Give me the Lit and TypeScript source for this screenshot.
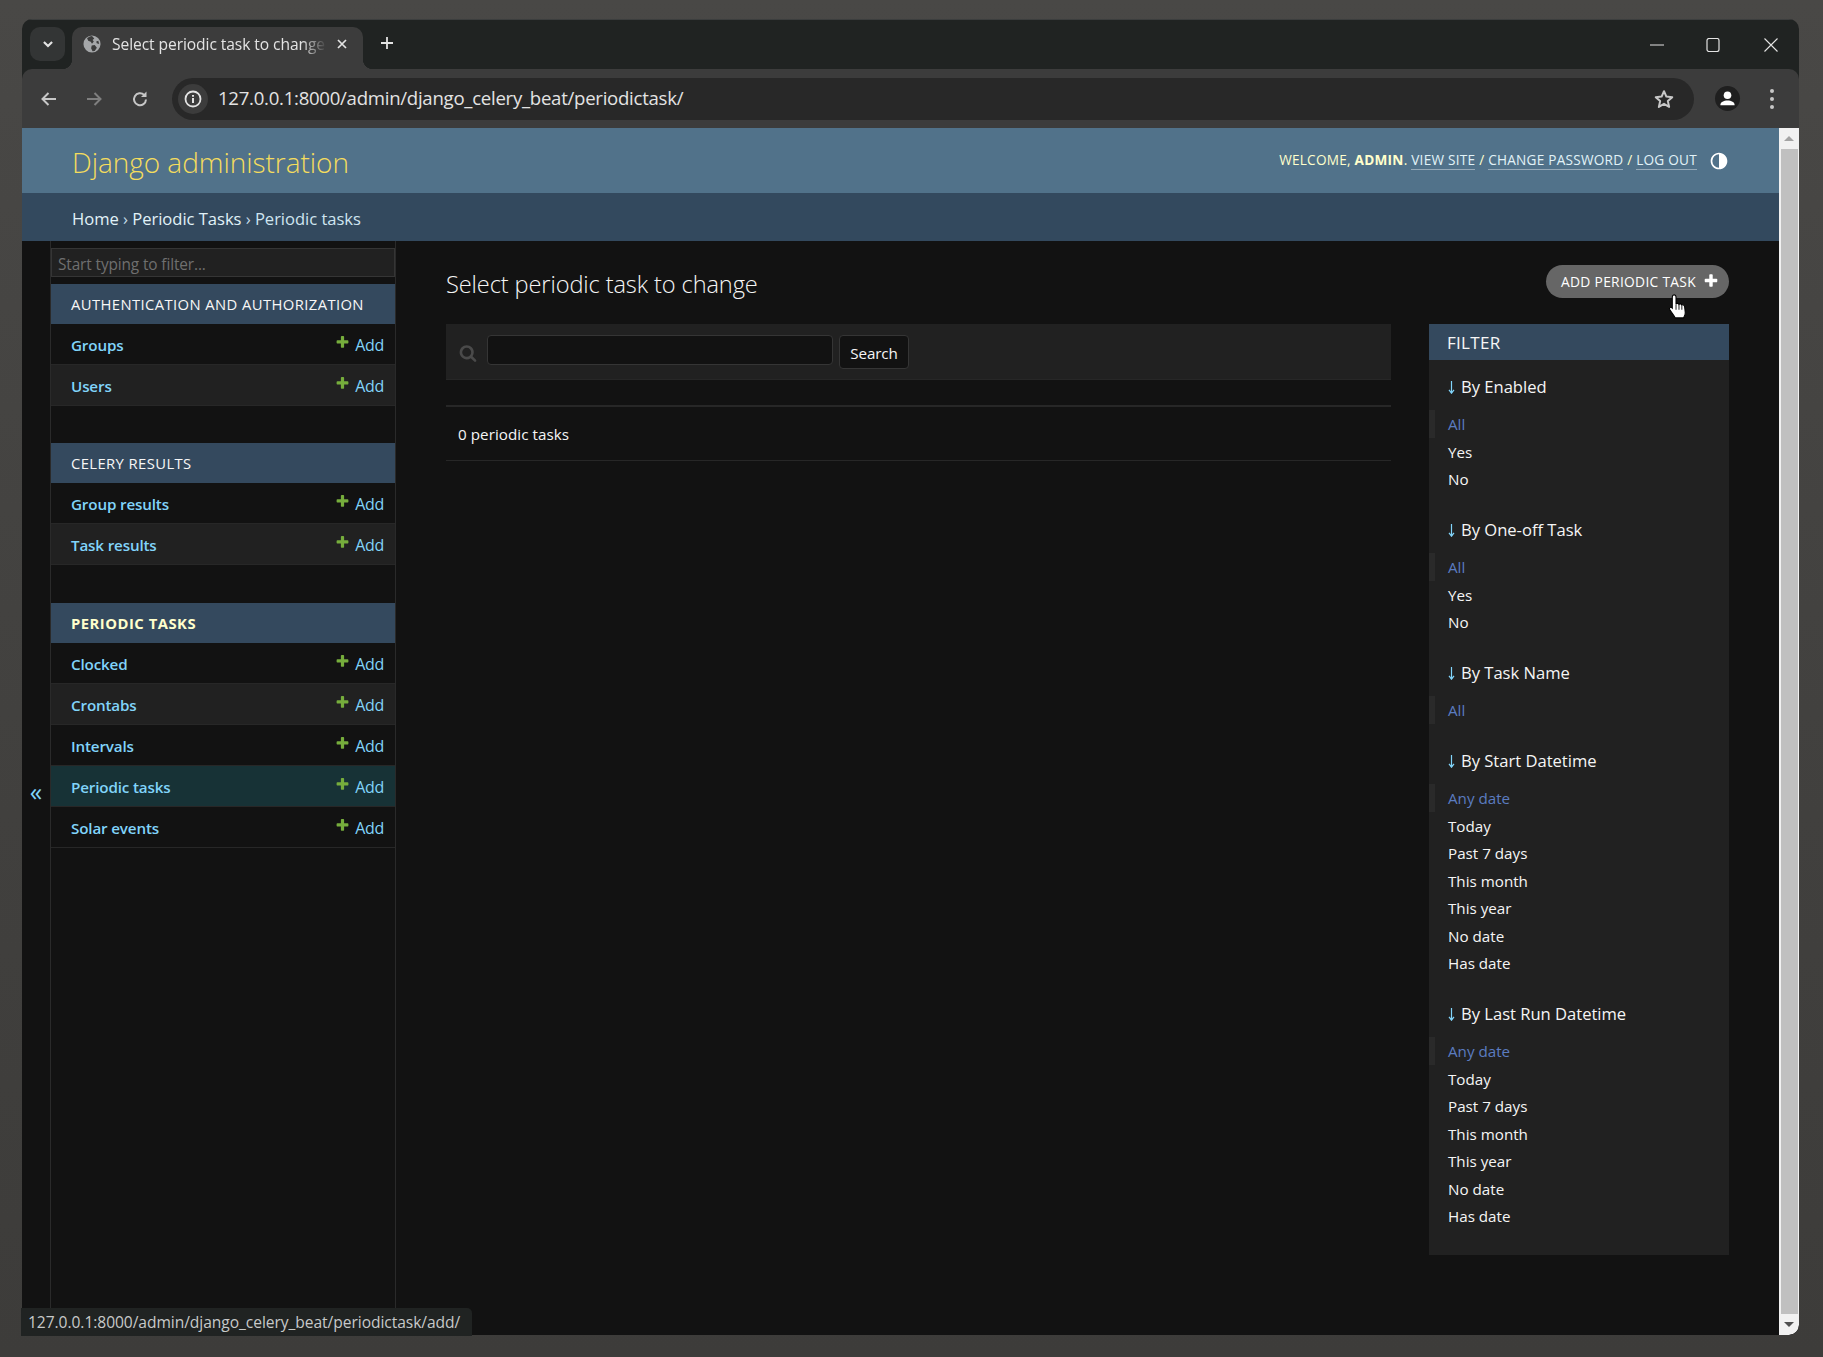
import { LitElement, html, css } from "lit";
import { customElement } from "lit/decorators.js";

const PLUS = "M1600 736v192q0 40-28 68t-68 28h-416v416q0 40-28 68t-68 28h-192q-40 0-68-28t-28-68v-416h-416q-40 0-68-28t-28-68v-192q0-40 28-68t68-28h416v-416q0-40 28-68t68-28h192q40 0 68 28t28 68v416h416q40 0 68 28t28 68z";
const SEARCH = "M1216 832q0-185-131.5-316.5t-316.5-131.5-316.5 131.5-131.5 316.5 131.5 316.5 316.5 131.5 316.5-131.5 131.5-316.5zm512 832q0 52-38 90t-90 38q-54 0-90-38l-343-342q-179 124-399 124-143 0-273.5-55.5t-225-150-150-225-55.5-273.5 55.5-273.5 150-225 225-150 273.5-55.5 273.5 55.5 225 150 150 225 55.5 273.5q0 220-124 399l343 343q37 37 37 90z";

const plus = (cls: string) => html`<svg class=${cls} viewBox="0 0 1792 1792"><path fill="currentColor" d=${PLUS}></path></svg>`;

const MODULES = [
  { name: "Authentication and Authorization", current: false, rows: [{ n: "Groups" }, { n: "Users" }] },
  { name: "Celery Results", current: false, rows: [{ n: "Group results" }, { n: "Task results" }] },
  {
    name: "Periodic Tasks",
    current: true,
    rows: [{ n: "Clocked" }, { n: "Crontabs" }, { n: "Intervals" }, { n: "Periodic tasks", sel: true }, { n: "Solar events" }],
  },
];

const DATES = ["Any date", "Today", "Past 7 days", "This month", "This year", "No date", "Has date"];
const FILTERS = [
  { t: "By Enabled", o: ["All", "Yes", "No"] },
  { t: "By One-off Task", o: ["All", "Yes", "No"] },
  { t: "By Task Name", o: ["All"] },
  { t: "By Start Datetime", o: DATES },
  { t: "By Last Run Datetime", o: DATES },
];

@customElement("app-root")
export class AppRoot extends LitElement {
  static styles = css`
    :host {
      display: block;
      width: 1823px;
      height: 1357px;
      box-sizing: border-box;
      padding: 19px 24px 22px 22px;
      background: linear-gradient(180deg, #494846 0%, #41403e 60%, #3d3c3a 100%);
      font-family: "Open Sans", "Noto Sans", sans-serif;
      overflow: hidden;
      position: relative;
    }
    * { box-sizing: border-box; }
    a { text-decoration: none; color: inherit; }
    .window {
      width: 1777px;
      height: 1316px;
      display: flex;
      flex-direction: column;
      border-radius: 10px;
      overflow: hidden;
      background: #202322;
    }
    .tabstrip {
      height: 50px;
      flex: none;
      display: flex;
      align-items: flex-start;
      padding: 8px 0 0 8px;
      position: relative;
      border-top: 1px solid #3c3e3e;
    }
    .tabmenu {
      width: 35px;
      height: 34px;
      border-radius: 10px;
      background: #333535;
      display: flex;
      align-items: center;
      justify-content: center;
      color: #e3e3e3;
      margin-top: -1px;
    }
    .tabmenu svg { width: 14px; height: 14px; }
    .tab {
      width: 291px;
      height: 42px;
      margin: -1px 0 0 7px;
      background: #3c3c3c;
      border-radius: 10px 10px 0 0;
      display: flex;
      align-items: center;
      padding: 0 0 8px 11px;
      color: #e3e3e3;
      font-size: 15.6px;
      letter-spacing: -0.08px;
      position: relative;
    }
    .tab::before, .tab::after {
      content: "";
      position: absolute;
      bottom: 0;
      width: 10px;
      height: 10px;
    }
    .tab::before { left: -10px; background: radial-gradient(circle at 0 0, transparent 10px, #3c3c3c 10.5px); }
    .tab::after { right: -10px; background: radial-gradient(circle at 100% 0, transparent 10px, #3c3c3c 10.5px); }
    .favicon { width: 18px; height: 18px; flex: none; }
    .tabtitle {
      margin-left: 11px;
      width: 215px;
      white-space: nowrap;
      overflow: hidden;
      -webkit-mask-image: linear-gradient(90deg, #000 88%, transparent 100%);
      mask-image: linear-gradient(90deg, #000 88%, transparent 100%);
    }
    .tabclose { width: 12px; height: 12px; margin-left: 9px; flex: none; color: #e3e3e3; }
    .newtab { width: 16px; height: 16px; margin: 7px 0 0 16px; color: #e3e3e3; flex: none; }
    .winctl { margin-left: auto; display: flex; align-items: center; gap: 44px; padding: 10px 21px 0 0; color: #e3e3e3; }
    .winctl svg { width: 14px; height: 14px; display: block; }
    .winctl svg:first-child { margin-right: -2px; }
    .toolbar {
      height: 59px;
      flex: none;
      background: #3c3c3c;
      border-radius: 10px 10px 0 0;
      display: flex;
      align-items: center;
      padding: 0 0 0 17px;
      color: #c7c7c7;
    }
    .navbtn { width: 20px; height: 20px; flex: none; margin-right: 25px; }
    .navbtn.off { color: #7f7f7f; margin-right: 26px; }
    .navbtn.reload { margin-right: 0; }
    .omnibox {
      width: 1522px;
      height: 42px;
      margin-left: 22px;
      border-radius: 21px;
      background: #282828;
      display: flex;
      align-items: center;
      padding: 0 19px 0 6px;
      font-size: 18.6px;
      color: #e3e3e3;
      letter-spacing: -0.27px;
    }
    .info {
      width: 30px;
      height: 30px;
      border-radius: 50%;
      background: #3c3c3c;
      display: flex;
      align-items: center;
      justify-content: center;
      margin-right: 10px;
      flex: none;
    }
    .info svg { width: 18px; height: 18px; }
    .url { flex: 1; white-space: nowrap; padding-bottom: 3px; }
    .star { width: 22px; height: 22px; color: #c7c7c7; flex: none; }
    .avatar {
      width: 25px;
      height: 25px;
      border-radius: 50%;
      background: #1f1f1f;
      margin-left: 21px;
      display: flex;
      align-items: center;
      justify-content: center;
      flex: none;
    }
    .avatar svg { width: 19px; height: 19px; }
    .dots { width: 4px; margin-left: 30px; display: flex; flex-direction: column; gap: 4px; flex: none; }
    .dots i { display: block; width: 4px; height: 4px; border-radius: 50%; background: #c7c7c7; }

    .page { flex: 1; display: flex; min-height: 0; background: #121212; }
    .site { flex: 1; display: flex; flex-direction: column; min-width: 0; }
    .scrollbar { width: 20px; flex: none; background: #f1f1f1; display: flex; flex-direction: column; align-items: center; border-bottom-right-radius: 10px; overflow: hidden; }
    .sbtn { height: 21px; width: 100%; display: flex; align-items: center; justify-content: center; flex: none; }
    .tri-up { width: 0; height: 0; border: 5px solid transparent; border-top: 0; border-bottom: 5px solid #a3a3a3; }
    .tri-down { width: 0; height: 0; border: 5px solid transparent; border-bottom: 0; border-top: 5px solid #505050; }
    .thumb { flex: 1; width: 17px; background: #c0c0c0; }

    .header {
      height: 65px;
      flex: none;
      background: #51728a;
      display: flex;
      align-items: center;
      justify-content: space-between;
      padding: 0 50px 0 50px;
    }
    .brand { font-size: 28px; font-weight: 300; color: #f5dd5d; letter-spacing: -0.05px; padding-top: 2px; }
    .usertools {
      display: flex;
      align-items: center;
      font-size: 13.6px;
      color: #ffffcc;
      text-transform: uppercase;
      letter-spacing: 0.25px;
      white-space: pre;
      padding-bottom: 2px;
    }
    .usertools strong { font-weight: 700; }
    .usertools a { border-bottom: 1px solid rgba(255, 255, 255, 0.4); color: #e1f2f8; }
    .themebtn { width: 20px; height: 20px; margin-left: 12px; color: #fff; flex: none; margin-bottom: -2px; }
    .crumbs {
      height: 48px;
      flex: none;
      background: #33495e;
      display: flex;
      align-items: center;
      padding: 2px 50px 0;
      font-size: 16.6px;
      color: #c4dce8;
      letter-spacing: -0.04px;
      white-space: pre;
    }
    .crumbs a { color: #e1f2f8; }
    .crumbs .cur { color: #cfe5f0; }

    .body { flex: 1; display: flex; min-height: 0; }
    .toggle {
      width: 28px;
      flex: none;
      display: flex;
      align-items: center;
      justify-content: center;
      color: #81d4fa;
      font-size: 25px;
      padding: 5px 0 0 0;
    }
    .sidebar {
      width: 346px;
      flex: none;
      border-left: 1px solid #2a2a2a;
      border-right: 1px solid #2a2a2a;
      padding-top: 7px;
      display: flex;
      flex-direction: column;
      gap: 7px;
    }
    .navfilter {
      height: 29px;
      background: #212121;
      border: 1px solid #353535;
      display: flex;
      align-items: center;
      padding: 3px 6px 0;
      font-size: 15.4px;
      color: #6f6f6f;
      letter-spacing: -0.12px;
      flex: none;
    }
    .modules { display: flex; flex-direction: column; gap: 37px; }
    .modules > div:last-child { margin-top: 1px; }
    .caption {
      height: 40px;
      background: #34495e;
      display: flex;
      align-items: center;
      padding: 0 20px;
      font-size: 14.8px;
      color: #f7f7f7;
      letter-spacing: 0.4px;
      text-transform: uppercase;
    }
    .caption.current { font-weight: 700; color: #ffffcc; letter-spacing: 0.5px; }
    .row {
      height: 41px;
      display: flex;
      align-items: center;
      padding: 1px 11px 0 20px;
      border-bottom: 1px solid #272727;
      font-size: 15.2px;
      color: #81d4fa;
      letter-spacing: -0.15px;
    }
    .row.alt { background: #212121; }
    .row.sel { background: #173236; }
    .rowname { flex: 1; font-weight: 600; }
    .addicon { width: 15px; height: 15px; color: #76ad3c; margin-right: 5px; margin-top: -5px; flex: none; }
    .addtext { color: #81d4fa; font-size: 16px; letter-spacing: -0.3px; }

    .content { flex: 1; min-width: 0; padding: 24px 50px 0; display: flex; flex-direction: column; gap: 26px; }
    .titlebar { display: flex; justify-content: space-between; align-items: flex-start; height: 33px; }
    .title { font-size: 23.6px; font-weight: 300; color: #f5f5f5; margin: 0; padding-top: 3px; letter-spacing: -0.11px; line-height: 33px; }
    .addbtn {
      width: 183px;
      height: 33px;
      border-radius: 17px;
      background: #666;
      display: flex;
      align-items: center;
      padding: 0 10px 0 15px;
      color: #fff;
      font-size: 13.8px;
      letter-spacing: 0.3px;
      text-transform: uppercase;
      white-space: nowrap;
    }
    .addbtn svg { width: 16px; height: 16px; margin-left: auto; margin-top: -2px; }
    .columns { display: flex; gap: 38px; align-items: flex-start; }
    .changelist { width: 945px; flex: none; }
    .searchbar {
      height: 56px;
      background: #212121;
      border-bottom: 1px solid #272727;
      display: flex;
      align-items: flex-start;
      padding: 11px 0 0 13px;
    }
    .searchicon { width: 18px; height: 18px; color: #4a4a4a; margin: 9px 10px 0 0; flex: none; }
    .searchinput { width: 346px; height: 30px; background: #121212; border: 1px solid #353535; border-radius: 4px; }
    .searchbtn {
      width: 70px;
      height: 34px;
      margin-left: 6px;
      background: #121212;
      border: 1px solid #353535;
      border-radius: 4px;
      color: #f5f5f5;
      font: inherit;
      font-size: 15.2px;
      letter-spacing: -0.1px;
      padding: 1px 0 0;
    }
    .paginator {
      margin-top: 25px;
      height: 56px;
      border-top: 2px solid #272727;
      border-bottom: 1px solid #272727;
      display: flex;
      align-items: center;
      padding-left: 12px;
      color: #f5f5f5;
      font-size: 15.2px;
      letter-spacing: 0.05px;
    }
    .filter { width: 300px; flex: none; background: #212121; padding-bottom: 25px; }
    .filterhead {
      height: 36px;
      background: #34495e;
      display: flex;
      align-items: center;
      padding-left: 18px;
      font-size: 17px;
      color: #f7f7f7;
      letter-spacing: 0.3px;
    }
    .fgroup { margin-top: 27.5px; }
    .fgroup.first { margin-top: 17px; }
    .fheading {
      height: 20px;
      line-height: 20px;
      display: flex;
      align-items: center;
      padding-left: 19px;
      font-size: 16.6px;
      color: #f5f5f5;
      letter-spacing: -0.02px;
      margin-bottom: 13px;
      white-space: pre;
    }
    .arrow { width: 7px; height: 13px; color: #81d4fa; margin-right: 6px; flex: none; }
    .fitem {
      height: 27.5px;
      display: flex;
      align-items: center;
      padding: 1px 0 0 19px;
      font-size: 15.2px;
      color: #f5f5f5;
      letter-spacing: 0;
    }
    .fitem.sel { border-left: 6px solid #2a2a2a; padding-left: 13px; color: #5b7cc0; }

    .status {
      position: absolute;
      left: 21px;
      top: 1308px;
      height: 28px;
      width: 451px;
      background: #202322;
      border-top-right-radius: 5px;
      display: flex;
      align-items: center;
      padding-left: 7px;
      font-size: 15.6px;
      color: #c7c9c9;
      letter-spacing: -0.06px;
      white-space: nowrap;
    }
    .cursor { position: absolute; left: 1667px; top: 293px; width: 22px; height: 28px; }
  `;

  private row(r: { n: string; sel?: boolean }, i: number) {
    const cls = "row" + (r.sel ? " sel" : i % 2 ? " alt" : "");
    return html`<div class=${cls}>
      <a class="rowname">${r.n}</a>
      ${plus("addicon")}
      <a class="addtext">Add</a>
    </div>`;
  }

  render() {
    return html`
      <div class="window">
        <div class="tabstrip">
          <div class="tabmenu">
            <svg viewBox="0 0 12 12"><path d="M2.500 4.200 6 7.800l3.500-3.600" fill="none" stroke="currentColor" stroke-width="1.800"></path></svg>
          </div>
          <div class="tab">
            <svg class="favicon" viewBox="0 0 20 20">
              <circle cx="10" cy="10" r="9.500" fill="#a5a7a9"></circle>
              <path d="M10 1.200c-2 .2-4 1.100-5.500 2.500l1.300 2.600 2.800 1.200L10 9.800l2-2.500-1.300-1.800 1.800-1.500zM13 11l-3.300.7-.7 3 1.600 3.300 2.400-.2 2.400-3.500zM17 6.500l-2.300.6.5 2 2.800.9z" fill="#3c3c3c"></path>
            </svg>
            <span class="tabtitle">Select periodic task to change</span>
            <svg class="tabclose" viewBox="0 0 12 12"><path d="M2 2l8 8M10 2l-8 8" stroke="currentColor" stroke-width="1.700" fill="none"></path></svg>
          </div>
          <svg class="newtab" viewBox="0 0 16 16"><path d="M8 2v12M2 8h12" stroke="currentColor" stroke-width="1.800" fill="none"></path></svg>
          <div class="winctl">
            <svg viewBox="0 0 14 14"><path d="M0 7h14" stroke="currentColor" stroke-width="1" fill="none"></path></svg>
            <svg viewBox="0 0 14 14"><rect x="1" y="0.500" width="12" height="13" rx="2" stroke="currentColor" stroke-width="1.200" fill="none"></rect></svg>
            <svg viewBox="0 0 14 14"><path d="M.5.5l13 13M13.500.5l-13 13" stroke="currentColor" stroke-width="1.100" fill="none"></path></svg>
          </div>
        </div>
        <div class="toolbar">
          <svg class="navbtn" viewBox="0 0 20 20"><path d="M17 10H4M9.500 4 3.500 10l6 6" stroke="currentColor" stroke-width="2" fill="none"></path></svg>
          <svg class="navbtn off" viewBox="0 0 20 20"><path d="M3 10h13M10.500 4l6 6-6 6" stroke="currentColor" stroke-width="2" fill="none"></path></svg>
          <svg class="navbtn reload" viewBox="0 0 20 20"><path d="M16 10.500a6 6 0 1 1-1.800-4.600" stroke="currentColor" stroke-width="2" fill="none"></path><path d="M16.500 2.500v5.500H11z" fill="currentColor"></path></svg>
          <div class="omnibox">
            <div class="info">
              <svg viewBox="0 0 18 18"><circle cx="9" cy="9" r="7.500" stroke="#e3e3e3" stroke-width="1.800" fill="none"></circle><path d="M9 8v5M9 5v1.800" stroke="#e3e3e3" stroke-width="2" fill="none"></path></svg>
            </div>
            <span class="url">127.0.0.1:8000/admin/django_celery_beat/periodictask/</span>
            <svg class="star" viewBox="0 0 24 24"><path d="M12 3.500l2.600 5.900 6.400.6-4.800 4.300 1.400 6.300L12 17.300l-5.600 3.300 1.400-6.300L3 10l6.400-.6z" stroke="currentColor" stroke-width="2.200" stroke-linejoin="round" fill="none"></path></svg>
          </div>
          <div class="avatar">
            <svg viewBox="0 0 20 20"><circle cx="10" cy="6.500" r="4" fill="#fff"></circle><path d="M2.500 17c0-3.500 3.500-5 7.500-5s7.500 1.500 7.500 5z" fill="#fff"></path></svg>
          </div>
          <div class="dots"><i></i><i></i><i></i></div>
        </div>
        <div class="page">
          <div class="site">
            <div class="header">
              <a class="brand">Django administration</a>
              <div class="usertools">
                <span>Welcome, <strong>admin</strong>. </span><a>View site</a><span> / </span><a>Change password</a><span> / </span><a>Log out</a>
                <svg class="themebtn" viewBox="0 0 24 24"><path fill="currentColor" d="M12 22C6.477 22 2 17.523 2 12S6.477 2 12 2s10 4.477 10 10-4.477 10-10 10zm0-2V4a8 8 0 1 0 0 16z"></path></svg>
              </div>
            </div>
            <div class="crumbs"><a>Home</a> › <a>Periodic Tasks</a> › <span class="cur">Periodic tasks</span></div>
            <div class="body">
              <div class="toggle">«</div>
              <div class="sidebar">
                <div class="navfilter">Start typing to filter...</div>
                <div class="modules">
                  ${MODULES.map(
                    (m) => html`<div>
                      <div class="caption ${m.current ? "current" : ""}">${m.name}</div>
                      ${m.rows.map((r, i) => this.row(r, i))}
                    </div>`
                  )}
                </div>
              </div>
              <div class="content">
                <div class="titlebar">
                  <h1 class="title">Select periodic task to change</h1>
                  <a class="addbtn">Add periodic task ${plus("")}</a>
                </div>
                <div class="columns">
                  <div class="changelist">
                    <div class="searchbar">
                      <svg class="searchicon" viewBox="0 0 1792 1792"><path fill="currentColor" d=${SEARCH}></path></svg>
                      <div class="searchinput"></div>
                      <button class="searchbtn">Search</button>
                    </div>
                    <div class="paginator">0 periodic tasks</div>
                  </div>
                  <div class="filter">
                    <div class="filterhead">FILTER</div>
                    ${FILTERS.map(
                      (f, gi) => html`<div class="fgroup ${gi === 0 ? "first" : ""}">
                        <div class="fheading">
                          <svg class="arrow" viewBox="0 0 7 13"><path d="M3.500 0v11.500M1 8.800l2.500 3.400L6 8.800" stroke="currentColor" stroke-width="1.200" fill="none"></path></svg>
                          <span>${f.t}</span>
                        </div>
                        ${f.o.map((o, i) => html`<div class="fitem ${i === 0 ? "sel" : ""}">${o}</div>`)}
                      </div>`
                    )}
                  </div>
                </div>
              </div>
            </div>
          </div>
          <div class="scrollbar">
            <div class="sbtn"><div class="tri-up"></div></div>
            <div class="thumb"></div>
            <div class="sbtn"><div class="tri-down"></div></div>
          </div>
        </div>
      </div>
      <div class="status">127.0.0.1:8000/admin/django_celery_beat/periodictask/add/</div>
      <svg class="cursor" viewBox="0 0 20 25">
        <path d="M6.500 1.500c1 0 1.700.8 1.700 1.800v6.500c.3-.8 2.300-.9 2.700.3.500-.7 2.200-.6 2.600.6.700-.5 2.300-.2 2.500 1.200l.6 5.500c.2 2-.8 3.500-1.500 5H7.500c-.8-1.800-3-4.500-5-7.500-.9-1.500.7-2.800 2-1.700l.3.300V3.300c0-1 .7-1.800 1.700-1.800z" fill="#fff" stroke="#000" stroke-width="1"></path>
        <path d="M8.200 10v5M10.900 10v5M13.500 11v4" stroke="#000" stroke-width=".8" fill="none"></path>
      </svg>
    `;
  }
}
